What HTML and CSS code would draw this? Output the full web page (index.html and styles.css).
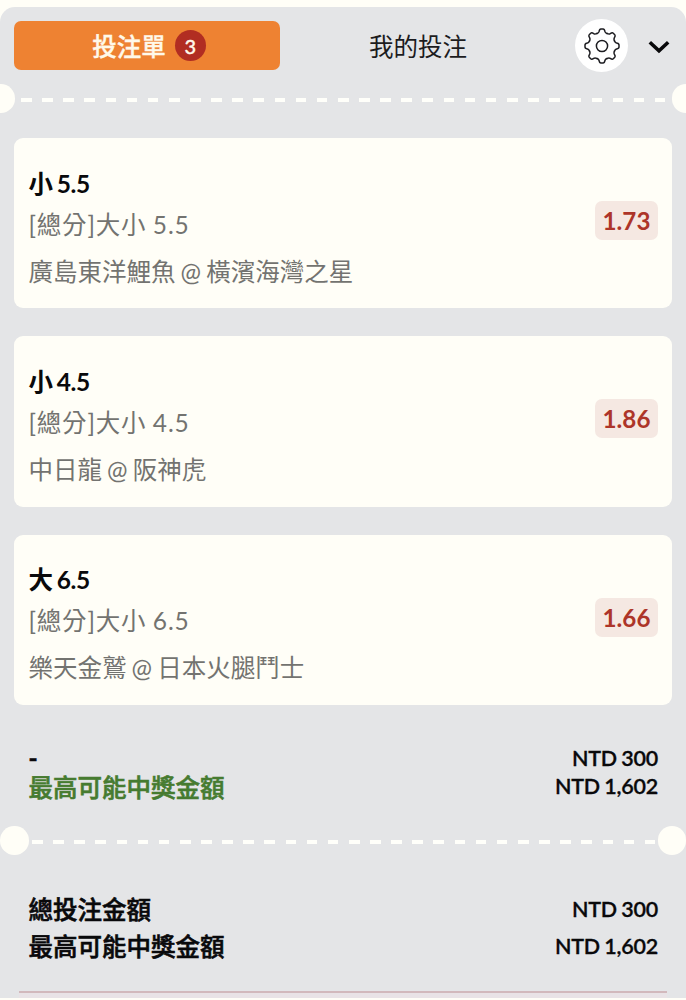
FILE: index.html
```html
<!DOCTYPE html>
<html lang="zh-Hant">
<head>
<meta charset="utf-8">
<title>投注單</title>
<link rel="stylesheet" href="styles.css">
</head>
<body>
<main class="slip">
  <header class="tabs">
    <div class="tab tab-active"><span>投注單</span><span class="count">3</span></div>
    <div class="tab">我的投注</div>
    <div class="settings">
      <svg width="38" height="38" viewBox="-19 -19 38 38" fill="none" stroke="#1c1c20" stroke-width="1.5" stroke-linecap="round">
        <defs><path id="tooth" d="M-5.15-12.45C-3.7-13-3.2-13.1-2.9-14.6C-2.6-16.3-2.2-17-1.1-17H1.1C2.2-17 2.6-16.3 2.9-14.6C3.2-13.1 3.7-13 5.15-12.45"/></defs>
        <use href="#tooth"/><use href="#tooth" transform="rotate(45)"/><use href="#tooth" transform="rotate(90)"/><use href="#tooth" transform="rotate(135)"/><use href="#tooth" transform="rotate(180)"/><use href="#tooth" transform="rotate(225)"/><use href="#tooth" transform="rotate(270)"/><use href="#tooth" transform="rotate(315)"/>
        <circle r="5.6"/>
      </svg>
    </div>
    <svg class="chevron" width="22" height="14" viewBox="0 0 22 14" fill="none" stroke="#09090b" stroke-width="3.6"><path d="M1.8 2.2L11 10.8L20.2 2.2"/></svg>
  </header>

  <div class="divider divider-edge"><i class="hole"></i><i class="dashes"></i><i class="hole"></i></div>

  <section class="bets">
    <article class="card">
      <div class="info"><h2 class="pick">小 5.5</h2><p class="market">[總分]大小 5.5</p><p class="teams">廣島東洋鯉魚 @ 橫濱海灣之星</p></div>
      <span class="odds">1.73</span>
    </article>
    <article class="card">
      <div class="info"><h2 class="pick">小 4.5</h2><p class="market">[總分]大小 4.5</p><p class="teams">中日龍 @ 阪神虎</p></div>
      <span class="odds">1.86</span>
    </article>
    <article class="card">
      <div class="info"><h2 class="pick">大 6.5</h2><p class="market">[總分]大小 6.5</p><p class="teams">樂天金鷲 @ 日本火腿鬥士</p></div>
      <span class="odds">1.66</span>
    </article>
  </section>

  <section class="sums">
    <div class="row"><span class="label dash">-</span><span class="amount">NTD 300</span></div>
    <div class="row"><span class="label win">最高可能中獎金額</span><span class="amount">NTD 1,602</span></div>
  </section>

  <div class="divider"><i class="hole"></i><i class="dashes"></i><i class="hole"></i></div>

  <section class="sums totals">
    <div class="row"><span class="label">總投注金額</span><span class="amount">NTD 300</span></div>
    <div class="row"><span class="label">最高可能中獎金額</span><span class="amount">NTD 1,602</span></div>
  </section>
  <div class="footer-line"></div>
</main>
</body>
</html>
```

FILE: styles.css
```css
* { box-sizing: border-box; margin: 0; padding: 0; }
body {
  width: 686px;
  height: 1000px;
  padding-top: 7px;
  overflow: hidden;
  background: #fffef7;
  font-family: Lato, "Noto Sans CJK TC", sans-serif;
  font-size: 24.5px;
  color: #09090b;
}
.slip {
  height: 991px;
  display: flex;
  flex-direction: column;
  background: #e4e5e7;
  border-radius: 15px 15px 0 0;
  overflow: hidden;
}
.tabs {
  display: flex;
  align-items: center;
  height: 77px;
  padding: 0 16px 0 14px;
  flex: none;
}
.tab {
  width: 266px;
  height: 49px;
  margin-right: 5px;
  display: flex;
  align-items: center;
  justify-content: center;
  gap: 9px;
  color: #1c1c1e;
}
.tab-active {
  padding-left: 4px;
  background: #ee8232;
  border-radius: 7px;
  color: #fff9ea;
  font-weight: 500;
  -webkit-text-stroke: .35px currentColor;
}
.count {
  width: 31px;
  height: 31px;
  border-radius: 50%;
  background: #b12d22;
  font-size: 20px;
  line-height: 32px;
  text-align: center;
}
.settings {
  width: 53px;
  height: 53px;
  margin-left: 19px;
  border-radius: 50%;
  background: #fff;
  display: flex;
  align-items: center;
  justify-content: center;
}
.chevron { margin: 3px 0 0 20px; }
.divider {
  display: flex;
  align-items: center;
  height: 29px;
  flex: none;
}
.divider-edge { margin: 0 -14px; }
.hole {
  width: 28.5px;
  height: 28.5px;
  border-radius: 50%;
  background: #fffef7;
  flex: none;
}
.dashes {
  flex: 1;
  height: 4px;
  margin: 3px 2.5px 0 3.5px;
  background: repeating-linear-gradient(90deg, #fffffa 0 10.6px, transparent 10.6px 21.13px);
}
.divider-edge .dashes { margin: 3px 7px 0 6.5px; }
.bets {
  display: flex;
  flex-direction: column;
  gap: 28px;
  padding: 25px 14px 0;
}
.card {
  height: 170.3px;
  display: flex;
  align-items: center;
  justify-content: space-between;
  padding: 0 14px;
  border-radius: 9px;
  background: #fffef7;
}
.pick { font-size: 24.5px; font-weight: 700; line-height: 38px; word-spacing: -1.7px; letter-spacing: -.3px; }
.market { line-height: 44px; letter-spacing: .8px; word-spacing: -.5px; color: #737370; }
.teams { line-height: 49px; word-spacing: -1.2px; color: #737370; }
.info { padding: 14px 0 0 .5px; white-space: nowrap; }
.odds {
  width: 63px;
  height: 39px;
  margin-bottom: 5px;
  border-radius: 7px;
  background: #f5e8e2;
  color: #ad3529;
  font-weight: 700;
  font-size: 24.2px;
  line-height: 39px;
  text-align: center;
}
.sums { padding: 39px 28px 25px 28.5px; }
.row {
  display: flex;
  align-items: center;
  justify-content: space-between;
  height: 28.5px;
  line-height: 28.5px;
  font-weight: 600;
}
.label { font-weight: 500; -webkit-text-stroke: .6px currentColor; }
.dash { font-weight: 700; }
.amount { font-size: 21.5px; word-spacing: -1px; letter-spacing: -.2px; -webkit-text-stroke: .3px currentColor; }
.win { color: #467b30; padding-top: 3px; }
.totals { padding: 36px 28px 0 28.5px; }
.totals .row { height: 37px; line-height: 37px; }
.footer-line {
  margin: auto 19px 0;
  height: 7px;
  border-top: 2px solid #d2b9bc;
  background: #e9e3e6;
  flex: none;
}
```
